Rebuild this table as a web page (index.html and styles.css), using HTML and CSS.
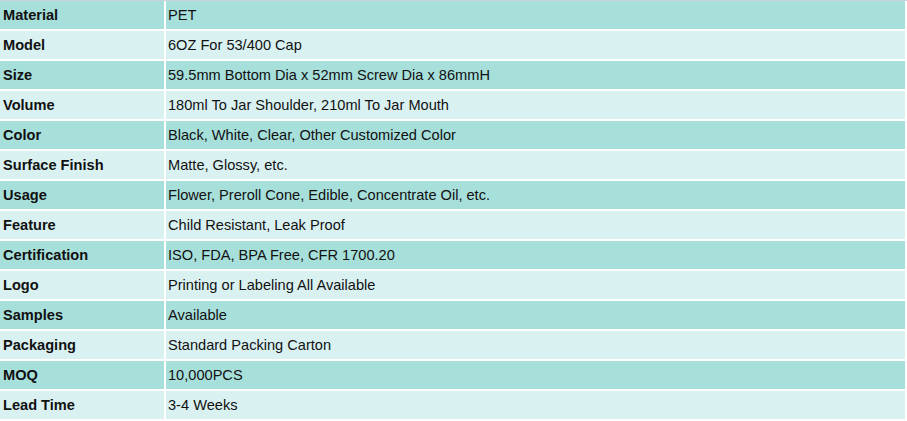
FILE: index.html
```html
<!DOCTYPE html>
<html>
<head>
<meta charset="utf-8">
<link rel="stylesheet" href="styles.css">
</head>
<body>
<div class="topline"></div>
<div class="spec">
  <div class="k dark">Material</div><div class="v dark">PET</div>
  <div class="k light">Model</div><div class="v light">6OZ For 53/400 Cap</div>
  <div class="k dark">Size</div><div class="v dark">59.5mm Bottom Dia x 52mm Screw Dia x 86mmH</div>
  <div class="k light">Volume</div><div class="v light">180ml To Jar Shoulder, 210ml To Jar Mouth</div>
  <div class="k dark">Color</div><div class="v dark">Black, White, Clear, Other Customized Color</div>
  <div class="k light">Surface Finish</div><div class="v light">Matte, Glossy, etc.</div>
  <div class="k dark">Usage</div><div class="v dark">Flower, Preroll Cone, Edible, Concentrate Oil, etc.</div>
  <div class="k light">Feature</div><div class="v light">Child Resistant, Leak Proof</div>
  <div class="k dark">Certification</div><div class="v dark">ISO, FDA, BPA Free, CFR 1700.20</div>
  <div class="k light">Logo</div><div class="v light">Printing or Labeling All Available</div>
  <div class="k dark">Samples</div><div class="v dark">Available</div>
  <div class="k light">Packaging</div><div class="v light">Standard Packing Carton</div>
  <div class="k dark">MOQ</div><div class="v dark">10,000PCS</div>
  <div class="k light">Lead Time</div><div class="v light">3-4 Weeks</div>
</div>
</body>
</html>
```
FILE: styles.css
```css
html, body {
  margin: 0;
  padding: 0;
  background: #ffffff;
}
body {
  width: 907px;
  height: 421px;
  overflow: hidden;
  font-family: "Liberation Sans", Arial, sans-serif;
  font-size: 14.6px;
  color: #111111;
}
.topline {
  height: 1px;
  background: #c9d2df;
}
.spec {
  display: grid;
  grid-template-columns: 164px 739px;
  grid-auto-rows: 28px;
  column-gap: 2px;
  row-gap: 2px;
}
.k, .v {
  line-height: 27px;
  padding-top: 1px;
  white-space: nowrap;
}
.k {
  font-weight: bold;
  padding-left: 3px;
}
.v {
  padding-left: 2px;
}
.dark {
  background: #a7dfdb;
}
.light {
  background: #daf1f2;
}
```
